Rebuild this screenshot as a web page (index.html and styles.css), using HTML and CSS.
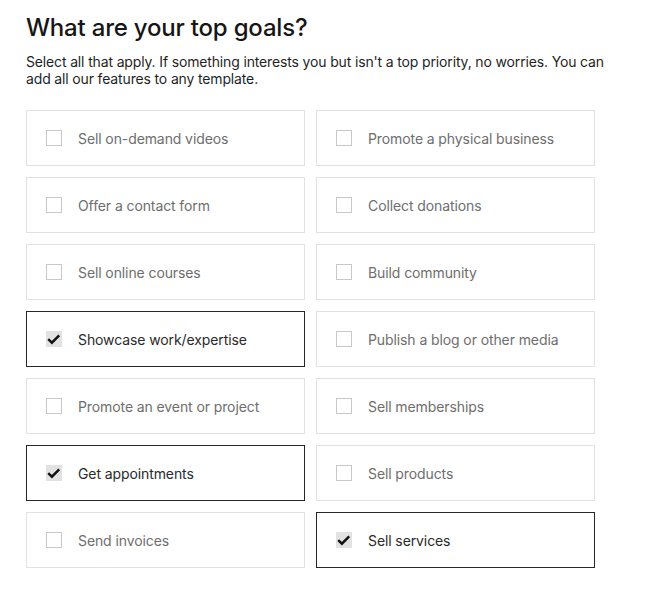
FILE: index.html
```html
<!DOCTYPE html>
<html>
<head>
<meta charset="utf-8">
<link rel="stylesheet" href="styles.css">
</head>
<body>
<main class="page">
  <h1 class="title">What are your top goals?</h1>
  <p class="intro">Select all that apply. If something interests you but isn't a top priority, no worries. You can add all our features to any template.</p>
  <div class="grid">
    <label class="card"><span class="box"></span><span class="label">Sell on-demand videos</span></label>
    <label class="card"><span class="box"></span><span class="label">Promote a physical business</span></label>
    <label class="card"><span class="box"></span><span class="label">Offer a contact form</span></label>
    <label class="card"><span class="box"></span><span class="label">Collect donations</span></label>
    <label class="card"><span class="box"></span><span class="label">Sell online courses</span></label>
    <label class="card"><span class="box"></span><span class="label">Build community</span></label>
    <label class="card checked"><span class="box"><svg class="tick" viewBox="0 0 16 16"><path d="M2.2 8.2 L5.9 11.7 L13.2 4.3" fill="none" stroke="#111" stroke-width="2.4"/></svg></span><span class="label">Showcase work/expertise</span></label>
    <label class="card"><span class="box"></span><span class="label">Publish a blog or other media</span></label>
    <label class="card"><span class="box"></span><span class="label">Promote an event or project</span></label>
    <label class="card"><span class="box"></span><span class="label">Sell memberships</span></label>
    <label class="card checked"><span class="box"><svg class="tick" viewBox="0 0 16 16"><path d="M2.2 8.2 L5.9 11.7 L13.2 4.3" fill="none" stroke="#111" stroke-width="2.4"/></svg></span><span class="label">Get appointments</span></label>
    <label class="card"><span class="box"></span><span class="label">Sell products</span></label>
    <label class="card"><span class="box"></span><span class="label">Send invoices</span></label>
    <label class="card checked"><span class="box"><svg class="tick" viewBox="0 0 16 16"><path d="M2.2 8.2 L5.9 11.7 L13.2 4.3" fill="none" stroke="#111" stroke-width="2.4"/></svg></span><span class="label">Sell services</span></label>
  </div>
</main>
</body>
</html>
```

FILE: styles.css
```css
html, body {
  margin: 0;
  padding: 0;
  background: #fff;
}

body {
  font-family: Inter, "Liberation Sans", sans-serif;
  color: #1a1a1a;
}

.page {
  padding: 13px 26px 20px 26px;
}

.title {
  margin: 0;
  font-size: 24px;
  line-height: 30px;
  font-weight: 500;
  letter-spacing: -0.2px;
  color: #161616;
}

.intro {
  margin: 10px 0 0 0;
  font-size: 14px;
  line-height: 17px;
  color: #1f1f1f;
  max-width: 590px;
  letter-spacing: -0.15px;
}

.grid {
  margin-top: 23px;
  display: grid;
  grid-template-columns: 279px 279px;
  column-gap: 11px;
  row-gap: 11px;
}

.card {
  box-sizing: border-box;
  height: 56px;
  border: 1px solid #e2e2e2;
  display: flex;
  align-items: center;
  padding-left: 19px;
  gap: 16px;
}

.card.checked {
  border-color: #262626;
}

.box {
  box-sizing: border-box;
  width: 16px;
  height: 16px;
  border: 1px solid #c8c8c8;
  background: #fff;
  display: flex;
  align-items: center;
  justify-content: center;
  flex: none;
}

.checked .box {
  border: none;
  background: #e2e2e2;
}

.tick {
  width: 16px;
  height: 16px;
  display: block;
}

.label {
  font-size: 14px;
  color: #6e6e6e;
  letter-spacing: -0.1px;
}

.checked .label {
  color: #2a2a2a;
}
```
